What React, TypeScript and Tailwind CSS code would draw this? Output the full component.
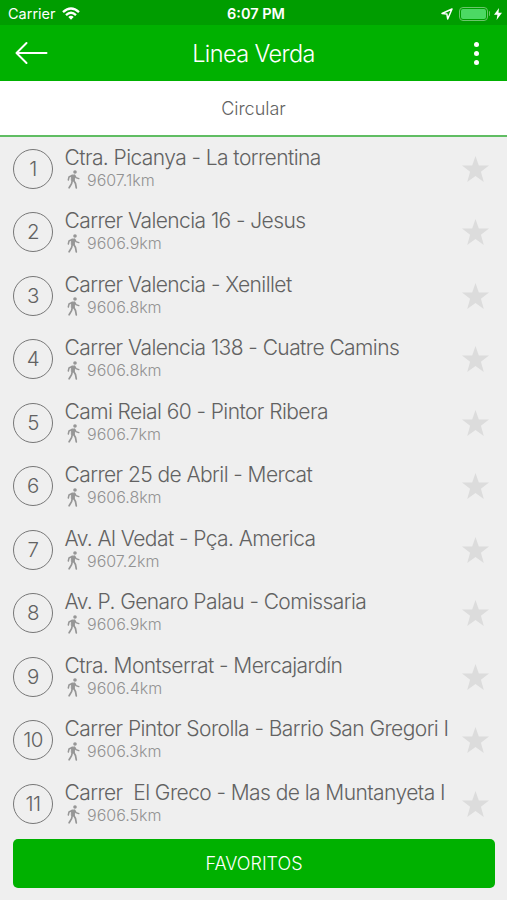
const stops = [
  { name: "Ctra. Picanya - La torrentina", distance: "9607.1km" },
  { name: "Carrer Valencia 16 - Jesus", distance: "9606.9km" },
  { name: "Carrer Valencia - Xenillet", distance: "9606.8km" },
  { name: "Carrer Valencia 138 - Cuatre Camins", distance: "9606.8km" },
  { name: "Cami Reial 60 - Pintor Ribera", distance: "9606.7km" },
  { name: "Carrer 25 de Abril - Mercat", distance: "9606.8km" },
  { name: "Av. Al Vedat - Pça. America", distance: "9607.2km" },
  { name: "Av. P. Genaro Palau - Comissaria", distance: "9606.9km" },
  { name: "Ctra. Montserrat - Mercajardín", distance: "9606.4km" },
  { name: "Carrer Pintor Sorolla - Barrio San Gregori I", distance: "9606.3km" },
  { name: "Carrer  El Greco - Mas de la Muntanyeta I", distance: "9606.5km" },
];

const WalkIcon = () => (
  <svg viewBox="0 0 13 19" className="w-[13px] h-[19px] shrink-0" fill="none" stroke="#969696" strokeLinecap="round" strokeLinejoin="round">
    <circle cx="8" cy="2" r="1.8" fill="#969696" stroke="none" />
    <path d="M4.9 5.3 7.6 4.9 7.3 11 4.7 10.5Z" fill="#969696" strokeWidth="1" />
    <path d="M5.1 5.3 2 7 1.3 10M7.7 5.4 9 7.6 11.8 8.6" strokeWidth="1.5" />
    <path d="M5.2 10.8 4.6 13.6 2.1 17.8M6.9 10.8 8.5 13.5 9.3 17.8" strokeWidth="1.7" />
  </svg>
);

const StatusBar = () => (
  <div className="relative h-[25px] bg-[#009d00] flex items-center justify-between pl-[8px] pr-[5px] pt-[2px]">
    <div className="flex items-center gap-[7px]">
      <p className="text-[14.5px] leading-[20px]">Carrier</p>
      <svg viewBox="0 0 18 13" className="w-[18px] h-[13px] -mt-[1px] -ml-[1px]" fill="none" stroke="white" strokeWidth="2.4">
        <path d="M1 5.1Q9-1.9 17 5.1" />
        <path d="M4 8.1Q9 3.6 14 8.1" />
        <path d="M6.3 10Q9 7.6 11.7 10L9 12.8Z" fill="white" stroke="none" />
      </svg>
    </div>
    <p className="absolute left-[227px] top-[4px] text-[14.5px] leading-[20px] font-semibold">6:07 PM</p>
    <div className="flex items-center">
      <svg viewBox="0 0 12 12" className="w-[12px] h-[12px] mr-[6px]" fill="none" stroke="white" strokeWidth="1.5" strokeLinejoin="round">
        <path d="M11 1 1 5.5 5.9 6.1 6.7 11Z" />
      </svg>
      <div className="w-[29px] h-[14px] rounded-[4px] border border-[#6bc56b] p-[1px]">
        <div className="h-full rounded-[2px] bg-[#4cd964]"></div>
      </div>
      <div className="w-[1.5px] h-[5px] rounded-r bg-[#6bc56b] ml-[1px]"></div>
      <svg viewBox="0 0 8 12" className="w-[8px] h-[12px] ml-[4px]" fill="white">
        <path d="M5 0 0 6.8H3.4L2.6 12 8 4.8H4.5Z" />
      </svg>
    </div>
  </div>
);

const App = () => {
  return (
    <div className="flex flex-col font-[Inter,sans-serif] w-[507px] h-[900px] bg-[#efefef] overflow-hidden">
      <header className="text-white">
        <StatusBar />
        <div className="flex items-center justify-between h-[56px] bg-[#00b100] pl-[15px] pr-[28px]">
          <button aria-label="Back" className="w-[33px]">
            <svg viewBox="0 0 33 24" className="w-[33px] h-[24px]" fill="none" stroke="white" strokeWidth="2" strokeLinecap="round" strokeLinejoin="round">
              <path d="M11.5 2 1.5 12 11.5 22M1.5 12H31.5" />
            </svg>
          </button>
          <h1 className="text-[23.5px] font-light leading-[30px] tracking-[-0.6px] pt-[2px] pr-[15px]">Linea Verda</h1>
          <button aria-label="More" className="flex flex-col gap-[4px]">
            <span className="size-[5px] rounded-full bg-white"></span>
            <span className="size-[5px] rounded-full bg-white"></span>
            <span className="size-[5px] rounded-full bg-white"></span>
          </button>
        </div>
      </header>
      {/* Direction */}
      <div className="flex items-center justify-center h-[56px] bg-white border-b-2 border-[#60bd63]">
        <p className="text-[18px] font-light text-[#626262]">Circular</p>
      </div>
      {/* Stops */}
      <ul className="flex flex-col">
        {stops.map((stop, index) => (
          <li key={index} className="flex items-center h-[63.5px] pl-[13px] pr-[18px]">
            <div className="flex items-center justify-center size-[40px] shrink-0 rounded-full border-[1.5px] border-[#777777] text-[20.5px] font-light tracking-[-0.5px] text-[#626262] pt-[1px]">
              {index + 1}
            </div>
            <div className="flex flex-col flex-1 min-w-0 ml-[11.5px] pb-[3px]">
              <p className="text-[21px] leading-[25px] font-light tracking-[-0.57px] text-[#626262] whitespace-pre">{stop.name}</p>
              <div className="flex items-center gap-[7px] h-[20px] pl-[2.5px]">
                <WalkIcon />
                <span className="text-[16px] leading-[20px] font-light text-[#929292]">{stop.distance}</span>
              </div>
            </div>
            <svg viewBox="0 0 26 25" className="w-[27px] h-[26px] shrink-0" fill="#dcdcdc">
              <path d="M13 0 16.2 9.2H26L18.2 15.2 21 25 13 19.2 5 25 7.8 15.2 0 9.2H9.8Z" />
            </svg>
          </li>
        ))}
      </ul>
      <button className="ml-[13px] mr-[12px] mt-[3.5px] h-[49px] shrink-0 rounded-[5px] bg-[#00b100] text-white text-[18px] font-light">
        FAVORITOS
      </button>
    </div>
  );
};

export default App;
